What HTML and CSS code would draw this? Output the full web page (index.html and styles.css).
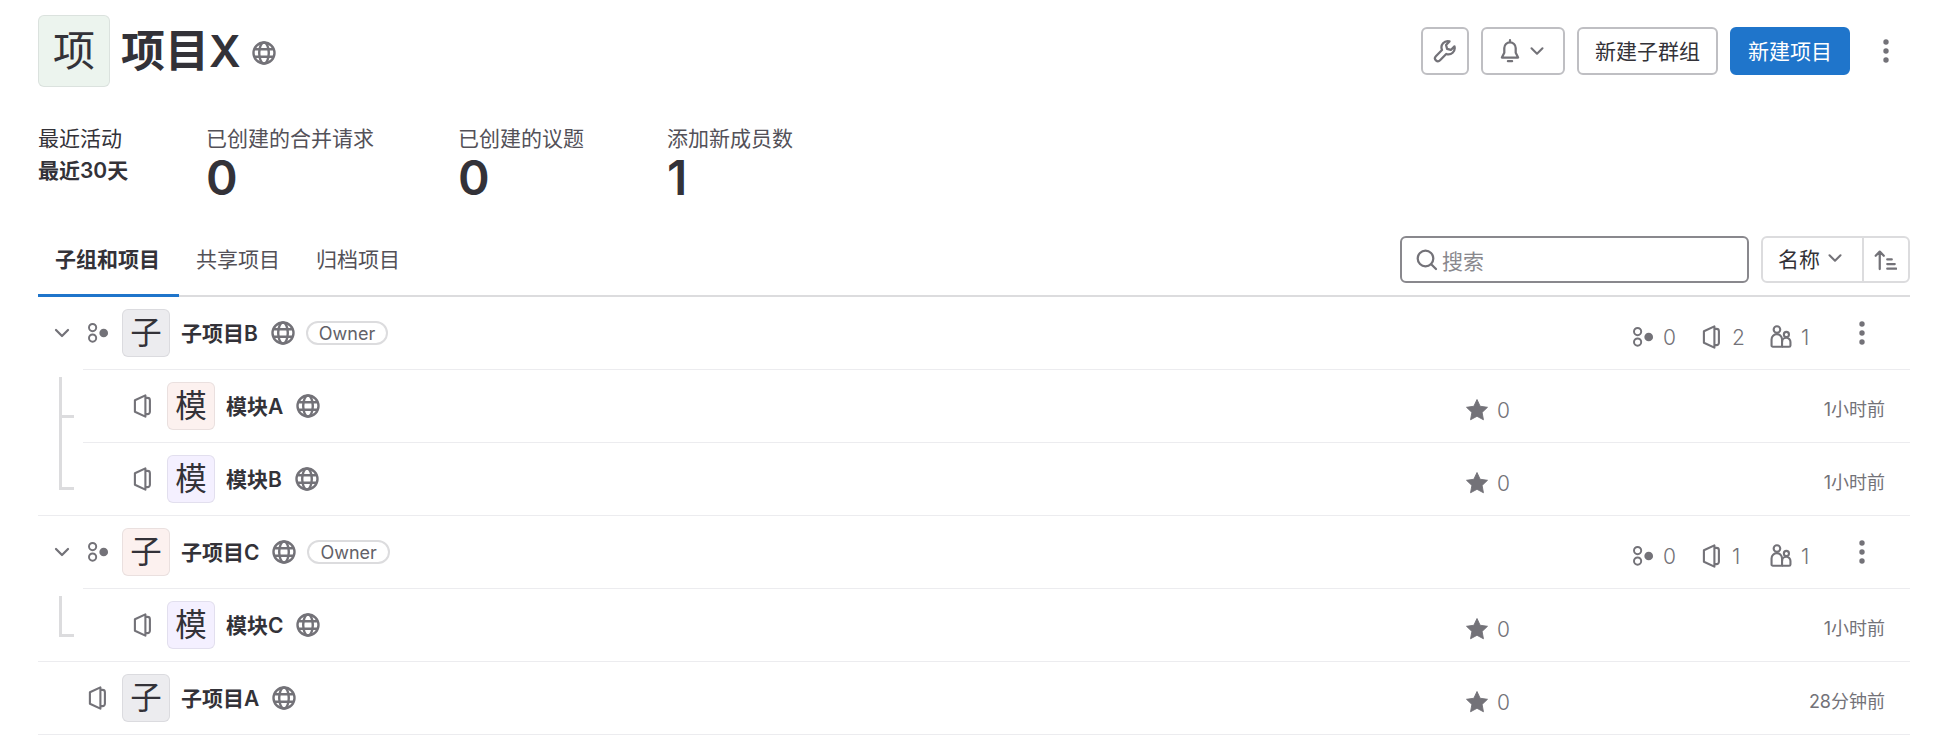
FILE: index.html
```html
<!DOCTYPE html>
<html lang="zh-CN">
<head>
  <meta charset="UTF-8">
  <title>项目X</title>
  <link rel="stylesheet" href="styles.css">
</head>
<body>
  <!-- icon sprites -->
  <svg class="sprites" xmlns="http://www.w3.org/2000/svg">
    <symbol id="i-globe" viewBox="0 0 16 16"><g fill="none" stroke="currentColor" stroke-width="1.6"><circle cx="8" cy="8" r="7"/><ellipse cx="8" cy="8" rx="3.2" ry="7"/><path d="M1.4 5.5h13.2M1.4 10.5h13.2"/></g></symbol>
    <symbol id="i-group" viewBox="0 0 16 16"><g fill="none" stroke="currentColor" stroke-width="1.3"><circle cx="4.4" cy="4.4" r="2.4"/><circle cx="4.4" cy="11.4" r="2.4"/></g><circle cx="11.8" cy="8" r="2.9" fill="currentColor"/></symbol>
    <symbol id="i-project" viewBox="0 0 16 16"><g fill="none" stroke="currentColor" stroke-width="1.4" stroke-linejoin="round"><path d="M2.6 4.2 9.6.9v14.2l-7-3.3z"/><path d="M9.6 2.6h1.4a1.6 1.6 0 0 1 1.6 1.6v7.6a1.6 1.6 0 0 1-1.6 1.6H9.6"/></g></symbol>
    <symbol id="i-users" viewBox="0 0 16 16"><g fill="none" stroke="currentColor" stroke-width="1.4" stroke-linejoin="round"><circle cx="5.3" cy="3" r="2.2"/><path d="M1.7 13.6v-4a3.5 3.5 0 0 1 7 0v4.9H2.6a.9.9 0 0 1-.9-.9z"/><circle cx="11.6" cy="6.3" r="1.7"/><path d="M8.7 14.5h4.7a.9.9 0 0 0 .9-.9v-2.3a2.8 2.8 0 0 0-5.6 0"/></g></symbol>
    <symbol id="i-star" viewBox="0 0 16 16"><path fill="currentColor" stroke="currentColor" stroke-width=".6" stroke-linejoin="round" d="M8 1l2.1 4.5 4.9.7-3.6 3.4.9 4.9L8 12.2l-4.3 2.3.9-4.9L1 6.2l4.9-.7z"/></symbol>
    <symbol id="i-chevron" viewBox="0 0 16 16"><path fill="none" stroke="currentColor" stroke-width="1.5" stroke-linecap="round" stroke-linejoin="round" d="M4 6l4 4 4-4"/></symbol>
    <symbol id="i-kebab" viewBox="0 0 16 16"><g fill="currentColor"><circle cx="8" cy="2" r="1.8"/><circle cx="8" cy="8" r="1.8"/><circle cx="8" cy="14" r="1.8"/></g></symbol>
  </svg>

  <div class="page">
    <header class="group-header">
      <div class="avatar avatar-lg green">项</div>
      <h1>项目X</h1>
      <svg class="icon title-globe"><use href="#i-globe"/></svg>
      <div class="header-actions">
        <button class="btn btn-icon" aria-label="设置">
          <svg class="icon" viewBox="0 0 16 16"><path fill="none" stroke="currentColor" stroke-width="1.5" stroke-linejoin="round" d="M11 1.6 8.7 4l.7 2.6 2.5.7 2.4-2.4A4.2 4.2 0 0 1 8.8 10l-4.1 4.2a1.9 1.9 0 0 1-2.8-2.7L6 7.3A4.2 4.2 0 0 1 11 1.6z"/></svg>
        </button>
        <button class="btn btn-bell" aria-label="通知">
          <svg class="icon" viewBox="0 0 16 16"><path fill="none" stroke="currentColor" stroke-width="1.5" stroke-linejoin="round" stroke-linecap="round" d="M8 .8v1.4M8 2.2a3.8 3.8 0 0 0-3.8 3.8v3.2L2.6 12.4h10.8l-1.6-3.2V6A3.8 3.8 0 0 0 8 2.2zM6.6 14.8h2.8"/></svg>
          <svg class="icon icon-sm"><use href="#i-chevron"/></svg>
        </button>
        <button class="btn btn-text">新建子群组</button>
        <button class="btn btn-text btn-primary">新建项目</button>
        <button class="btn-kebab" aria-label="更多"><svg class="icon"><use href="#i-kebab"/></svg></button>
      </div>
    </header>

    <section class="stats">
      <div class="stat-block period">
        <div class="stat-label">最近活动</div>
        <div class="stat-period">最近30天</div>
      </div>
      <div class="stat-block mr">
        <div class="stat-label">已创建的合并请求</div>
        <div class="stat-value">0</div>
      </div>
      <div class="stat-block issues">
        <div class="stat-label">已创建的议题</div>
        <div class="stat-value">0</div>
      </div>
      <div class="stat-block">
        <div class="stat-label">添加新成员数</div>
        <div class="stat-value">1</div>
      </div>
    </section>

    <nav class="tabs">
      <a class="tab active">子组和项目</a>
      <a class="tab">共享项目</a>
      <a class="tab">归档项目</a>
      <div class="tab-tools">
        <label class="search">
          <svg class="icon" viewBox="0 0 16 16"><g fill="none" stroke="currentColor" stroke-width="1.5" stroke-linecap="round"><circle cx="7" cy="7" r="5.2"/><path d="M10.8 10.8l3.2 3.2"/></g></svg>
          <input type="text" placeholder="搜索">
        </label>
        <div class="sort">
          <button class="sort-name">名称<svg class="icon icon-sm"><use href="#i-chevron"/></svg></button>
          <button class="sort-dir" aria-label="排序方向">
            <svg class="icon" viewBox="0 0 16 16"><path fill="none" stroke="currentColor" stroke-width="1.5" stroke-linecap="round" stroke-linejoin="round" d="M4.5 14v-11.5M1.8 5.2l2.7-2.8 2.7 2.8M9.5 7.6h3M9.5 10.7h5M9.5 13.8h6"/></svg>
          </button>
        </div>
      </div>
    </nav>

    <ul class="tree">
      <li class="item">
        <div class="row">
          <svg class="icon toggle"><use href="#i-chevron"/></svg>
          <svg class="icon"><use href="#i-group"/></svg>
          <div class="avatar gray">子</div>
          <span class="name">子项目B</span>
          <svg class="icon"><use href="#i-globe"/></svg>
          <span class="badge">Owner</span>
          <div class="group-stats">
            <span class="stat"><svg class="icon"><use href="#i-group"/></svg>0</span>
            <span class="stat"><svg class="icon"><use href="#i-project"/></svg>2</span>
            <span class="stat"><svg class="icon"><use href="#i-users"/></svg>1</span>
            <button class="btn-kebab row-kebab" aria-label="更多"><svg class="icon"><use href="#i-kebab"/></svg></button>
          </div>
        </div>
        <ul>
          <li class="row child first">
            <svg class="icon"><use href="#i-project"/></svg>
            <div class="avatar pink">模</div>
            <span class="name">模块A</span>
            <svg class="icon"><use href="#i-globe"/></svg>
            <div class="project-meta">
              <span class="stat"><svg class="icon"><use href="#i-star"/></svg>0</span>
              <time>1小时前</time>
            </div>
          </li>
          <li class="row child last">
            <svg class="icon"><use href="#i-project"/></svg>
            <div class="avatar purple">模</div>
            <span class="name">模块B</span>
            <svg class="icon"><use href="#i-globe"/></svg>
            <div class="project-meta">
              <span class="stat"><svg class="icon"><use href="#i-star"/></svg>0</span>
              <time>1小时前</time>
            </div>
          </li>
        </ul>
      </li>

      <li class="item">
        <div class="row">
          <svg class="icon toggle"><use href="#i-chevron"/></svg>
          <svg class="icon"><use href="#i-group"/></svg>
          <div class="avatar pink">子</div>
          <span class="name">子项目C</span>
          <svg class="icon"><use href="#i-globe"/></svg>
          <span class="badge">Owner</span>
          <div class="group-stats">
            <span class="stat"><svg class="icon"><use href="#i-group"/></svg>0</span>
            <span class="stat"><svg class="icon"><use href="#i-project"/></svg>1</span>
            <span class="stat"><svg class="icon"><use href="#i-users"/></svg>1</span>
            <button class="btn-kebab row-kebab" aria-label="更多"><svg class="icon"><use href="#i-kebab"/></svg></button>
          </div>
        </div>
        <ul>
          <li class="row child first last">
            <svg class="icon"><use href="#i-project"/></svg>
            <div class="avatar purple">模</div>
            <span class="name">模块C</span>
            <svg class="icon"><use href="#i-globe"/></svg>
            <div class="project-meta">
              <span class="stat"><svg class="icon"><use href="#i-star"/></svg>0</span>
              <time>1小时前</time>
            </div>
          </li>
        </ul>
      </li>

      <li class="item">
        <div class="row">
          <span class="toggle-space"></span>
          <svg class="icon"><use href="#i-project"/></svg>
          <div class="avatar gray">子</div>
          <span class="name">子项目A</span>
          <svg class="icon"><use href="#i-globe"/></svg>
          <div class="project-meta">
            <span class="stat"><svg class="icon"><use href="#i-star"/></svg>0</span>
            <time>28分钟前</time>
          </div>
        </div>
      </li>
    </ul>
  </div>
</body>
</html>
```

FILE: styles.css
```css
*,
*::before,
*::after {
  box-sizing: border-box;
}

body {
  margin: 0;
  background: #fff;
  color: #333238;
  font-family: "Inter", "Noto Sans CJK SC", sans-serif;
  font-size: 21px;
}

ul {
  list-style: none;
  margin: 0;
  padding: 0;
}

button {
  font: inherit;
  color: inherit;
  cursor: pointer;
}

.sprites {
  display: none;
}

.page {
  padding: 15px 42px 0 38px;
}

.icon {
  width: 24px;
  height: 24px;
  flex: none;
  color: #737278;
}

.icon-sm {
  width: 22px;
  height: 22px;
}

/* avatars */
.avatar {
  width: 48px;
  height: 48px;
  flex: none;
  display: flex;
  align-items: center;
  justify-content: center;
  border-radius: 6px;
  border: 1px solid rgba(31, 30, 36, 0.08);
  font-size: 31.5px;
  line-height: 1;
}

.avatar-lg {
  width: 72px;
  height: 72px;
  font-size: 42px;
}

.gray { background: #ececef; }
.pink { background: #fcf1ef; }
.purple { background: #f4f0ff; }
.green { background: #ecf4ee; }

/* header */
.group-header {
  display: flex;
  align-items: center;
}

h1 {
  margin: 0 0 0 11px;
  font-size: 44px;
  line-height: 72px;
  font-weight: 600;
}

.title-globe {
  margin-left: 11px;
  margin-top: 4px;
}

.header-actions {
  margin-left: auto;
  display: flex;
  align-items: center;
  gap: 12px;
}

.btn {
  height: 48px;
  padding: 0 16px;
  display: flex;
  align-items: center;
  justify-content: center;
  background: #fff;
  border: 2px solid #bfbfc3;
  border-radius: 6px;
}

.btn-text {
  padding-bottom: 3px;
}

.btn-icon {
  width: 48px;
  padding: 0;
}

.btn-bell {
  width: 84px;
  padding: 0;
  gap: 4px;
}

.btn-primary {
  background: #1f75cb;
  border-color: #1f75cb;
  color: #fff;
}

.btn-kebab {
  width: 48px;
  height: 48px;
  padding: 0;
  display: flex;
  align-items: center;
  justify-content: center;
  background: none;
  border: none;
}

/* stats */
.stats {
  display: flex;
  margin-top: 38px;
}

.stat-block {
  width: 208px;
}

.stat-block.period {
  width: 168px;
}

.stat-block.mr {
  width: 252px;
}

.stat-block.issues {
  width: 209px;
}

.stat-label {
  line-height: 28px;
  color: #535158;
}

.period .stat-label {
  color: #333238;
}

.stat-period {
  font-weight: 600;
  line-height: 36px;
}

.stat-value {
  font-size: 48px;
  line-height: 50px;
  font-weight: 600;
}

/* tabs */
.tabs {
  display: flex;
  align-items: stretch;
  height: 73px;
  margin-top: 21px;
  border-bottom: 2px solid #dcdcde;
}

.tab {
  display: flex;
  align-items: center;
  padding: 0 19px 3px 17px;
  margin-bottom: -2px;
  border-bottom: 3px solid transparent;
  color: #535158;
}

.tab.active {
  font-weight: 600;
  color: #333238;
  border-bottom-color: #1f75cb;
}

.tab-tools {
  margin-left: auto;
  display: flex;
  gap: 12px;
  padding-top: 12px;
  padding-bottom: 12px;
}

.search {
  width: 349px;
  display: flex;
  align-items: center;
  gap: 3px;
  padding: 0 13px;
  border: 2px solid #89888d;
  border-radius: 6px;
}

.search input {
  flex: 1;
  min-width: 0;
  border: none;
  outline: none;
  padding: 3px 0 0;
  font: inherit;
  color: #333238;
}

.search input::placeholder {
  color: #89888d;
}

.sort {
  display: flex;
}

.sort button {
  height: 100%;
  display: flex;
  align-items: center;
  background: #fff;
  border: 2px solid #dcdcde;
}

.sort-name {
  width: 103px;
  padding: 0 0 3px 15px;
  gap: 4px;
  border-radius: 6px 0 0 6px;
}

.sort-dir {
  width: 48px;
  padding: 0 0 0 9px;
  margin-left: -2px;
  border-radius: 0 6px 6px 0;
}

/* list */
.item {
  border-bottom: 1px solid #ececef;
}

.row {
  position: relative;
  height: 72px;
  display: flex;
  align-items: center;
  gap: 12px;
  padding-left: 12px;
}

.toggle {
  width: 24px;
}

.toggle-space {
  width: 24px;
  flex: none;
}

.name {
  font-weight: 600;
  margin: -2px 1px 0 -1px;
}

.badge {
  height: 24px;
  margin-left: -1px;
  padding: 0 11px;
  display: flex;
  align-items: center;
  border: 2px solid #dcdcde;
  border-radius: 12px;
  font-size: 18px;
  color: #626168;
}

.child {
  height: 73px;
  margin-left: 45px;
  padding-left: 48px;
  border-top: 1px solid #ececef;
}

/* tree connector drawn in the gutter left of the nested row */
.child::before {
  content: "";
  position: absolute;
  left: -24px;
  top: 0;
  width: 15px;
  height: 47px;
  border-left: 3px solid #dcdcde;
  border-bottom: 3px solid #dcdcde;
}

.child.first::before {
  top: 7px;
  height: 41px;
}

.child.first:not(.last)::after {
  content: "";
  position: absolute;
  left: -24px;
  top: 46px;
  bottom: -1px;
  width: 3px;
  background: #dcdcde;
}

.stat {
  display: flex;
  align-items: center;
  gap: 8px;
  color: #737278;
  font-weight: 300;
}

.group-stats {
  margin-left: auto;
  display: flex;
  align-items: center;
  padding-right: 24px;
}

.group-stats .stat {
  width: 69px;
  padding-top: 8px;
}

.project-meta {
  margin-left: auto;
  width: 445px;
  display: flex;
  align-items: center;
  justify-content: space-between;
  padding: 8px 25px 0 0;
}

time {
  font-size: 18px;
  color: #737278;
  margin-top: -4px;
}
```
